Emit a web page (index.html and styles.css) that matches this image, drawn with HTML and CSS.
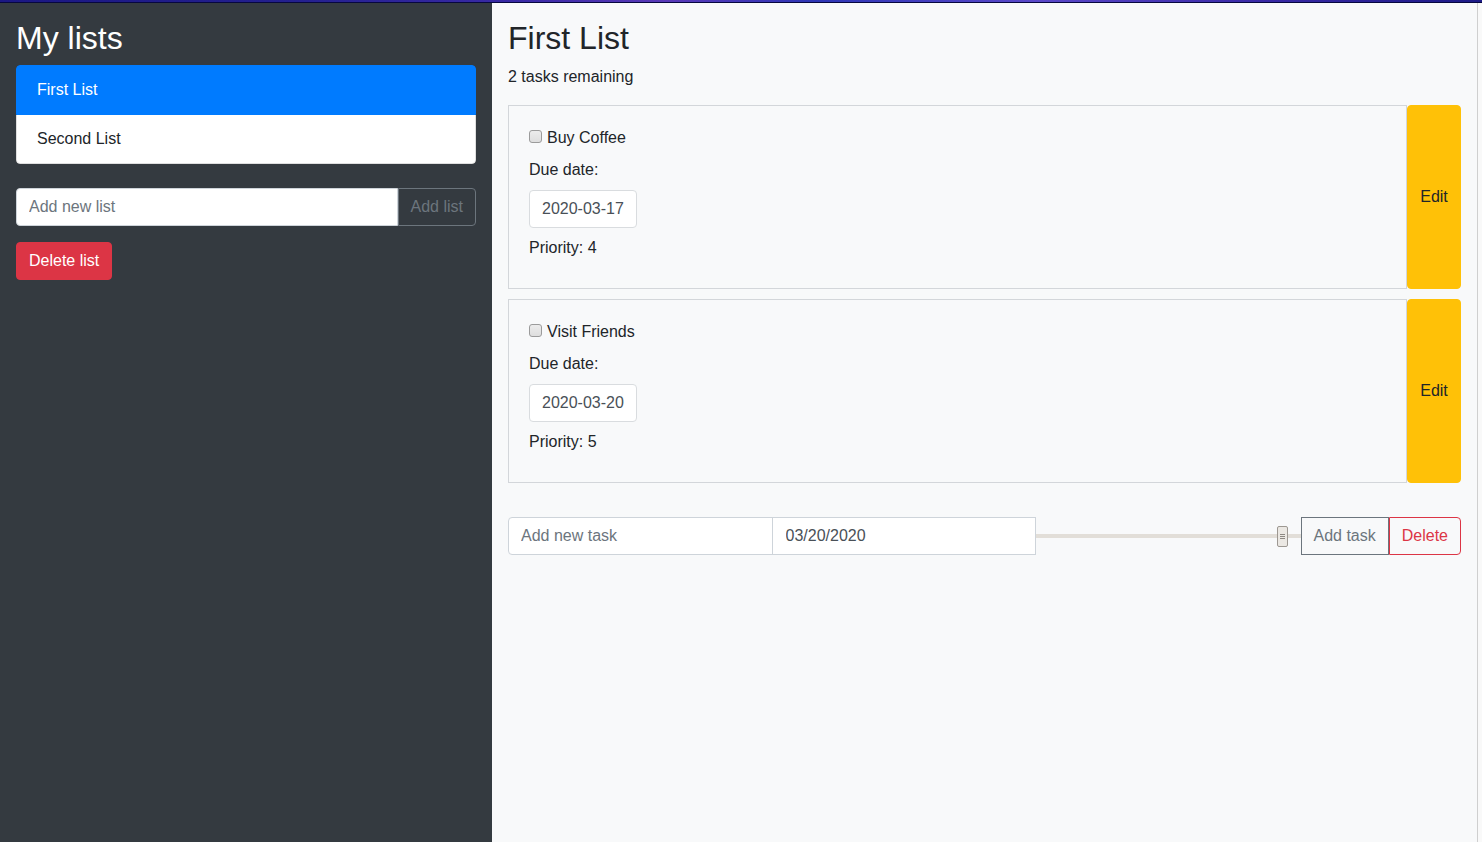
FILE: index.html
```html
<!DOCTYPE html>
<html lang="en">
<head>
<meta charset="utf-8">
<title>Todo lists</title>
<link rel="stylesheet" href="styles.css">
</head>
<body>
<div class="topbar"></div>
<div class="app">
  <aside class="sidebar">
    <h2 class="title title-light">My lists</h2>
    <ul class="list-group">
      <li class="list-item active">First List</li>
      <li class="list-item">Second List</li>
    </ul>
    <form class="input-group sidebar-form">
      <input class="form-control grow" type="text" placeholder="Add new list">
      <button class="btn btn-outline-secondary btn-last" type="button">Add list</button>
    </form>
    <button class="btn btn-danger" type="button">Delete list</button>
  </aside>

  <main class="main">
    <h2 class="title">First List</h2>
    <p class="remaining">2 tasks remaining</p>

    <div class="tasks">
      <div class="task-row">
        <div class="task-box">
          <label class="task-check"><input type="checkbox" class="checkbox">Buy Coffee</label>
          <div class="task-line">Due date:</div>
          <input class="date-field" type="text" value="2020-03-17">
          <div class="task-line">Priority: 4</div>
        </div>
        <button class="btn btn-warning btn-edit" type="button">Edit</button>
      </div>
      <div class="task-row">
        <div class="task-box">
          <label class="task-check"><input type="checkbox" class="checkbox">Visit Friends</label>
          <div class="task-line">Due date:</div>
          <input class="date-field" type="text" value="2020-03-20">
          <div class="task-line">Priority: 5</div>
        </div>
        <button class="btn btn-warning btn-edit" type="button">Edit</button>
      </div>
    </div>

    <form class="input-group add-task">
      <input class="form-control third first-ctl" type="text" placeholder="Add new task">
      <input class="form-control third mid-ctl" type="text" value="03/20/2020">
      <input class="range third" type="range" min="0" max="100" value="95">
      <button class="btn btn-outline-secondary btn-mid" type="button">Add task</button>
      <button class="btn btn-outline-danger btn-last" type="button">Delete</button>
    </form>
  </main>

  <div class="edge"></div>
</div>
</body>
</html>
```

FILE: styles.css
```css
* {
  box-sizing: border-box;
}

html, body {
  margin: 0;
  padding: 0;
}

body {
  font-family: "Liberation Sans", Arial, sans-serif;
  font-size: 16px;
  line-height: 1.5;
  color: #212529;
  background: #f8f9fa;
  overflow: hidden;
}

.topbar {
  height: 3px;
  background:
    linear-gradient(to bottom, transparent 0, transparent 2px, #07073f 2px),
    linear-gradient(to right, #1b1783 0%, #24208f 20%, #3a2aa6 35%, #5a3ab8 45%, #2e36b5 55%, #5b49c9 70%, #3a2aa6 85%, #1c1a86 100%);
}

.app {
  display: flex;
  height: 839px;
}

/* Sidebar */
.sidebar {
  width: 492px;
  flex: 0 0 492px;
  background: #343a40;
  padding: 16px;
}

.title {
  margin: 0 0 8px;
  font-size: 32px;
  font-weight: 400;
  line-height: 1.2;
  color: #212529;
}

.title-light {
  color: #ffffff;
}

.list-group {
  list-style: none;
  margin: 0 0 24px;
  padding: 0;
  border-radius: 4px;
  overflow: hidden;
}

.list-item {
  padding: 12px 20px;
  background: #ffffff;
  color: #212529;
  border: 1px solid rgba(0, 0, 0, 0.125);
}

.list-item + .list-item {
  border-top-width: 0;
}

.list-item.active {
  background: #007bff;
  border-color: #007bff;
  color: #ffffff;
}

.list-item:first-child {
  border-radius: 4px 4px 0 0;
}

.list-item:last-child {
  border-radius: 0 0 4px 4px;
}

.input-group {
  display: flex;
  align-items: stretch;
}

.sidebar-form {
  margin: 0 0 16px;
}

.form-control {
  display: block;
  height: 38px;
  padding: 6px 12px;
  font-family: inherit;
  font-size: 16px;
  line-height: 1.5;
  color: #495057;
  background: #ffffff;
  border: 1px solid #ced4da;
  border-radius: 4px;
  margin: 0;
  min-width: 0;
}

.form-control::placeholder {
  color: #6c757d;
  opacity: 1;
}

.grow {
  flex: 1 1 auto;
  border-radius: 4px 0 0 4px;
}

.btn {
  display: inline-block;
  font-family: inherit;
  font-size: 16px;
  line-height: 1.5;
  padding: 6px 12px;
  border: 1px solid transparent;
  border-radius: 4px;
  background: transparent;
  margin: 0;
  cursor: pointer;
  white-space: nowrap;
}

.btn-outline-secondary {
  color: #6c757d;
  border-color: #6c757d;
  background: transparent;
}

.btn-outline-danger {
  color: #dc3545;
  border-color: #dc3545;
  background: transparent;
}

.btn-danger {
  color: #ffffff;
  background: #dc3545;
  border-color: #dc3545;
}

.btn-warning {
  color: #212529;
  background: #ffc107;
  border-color: #ffc107;
}

.btn-last {
  border-radius: 0 4px 4px 0;
}

.btn-mid {
  border-radius: 0;
}

/* Main */
.main {
  width: 985px;
  flex: 0 0 985px;
  background: #f8f9fa;
  padding: 16px;
}

.remaining {
  margin: 0 0 16px;
}

.tasks {
  display: flex;
  flex-direction: column;
  gap: 10px;
  margin-bottom: 34px;
}

.task-row {
  display: flex;
  align-items: stretch;
}

.task-box {
  flex: 1 1 auto;
  border: 1px solid #d3d6da;
  padding: 20px;
}

.task-box > * {
  margin-bottom: 8px;
}

.task-check {
  display: flex;
  align-items: center;
  height: 24px;
}

.checkbox {
  -webkit-appearance: none;
  appearance: none;
  width: 13px;
  height: 13px;
  margin: -3px 5px 0 0;
  background: linear-gradient(#ececec, #dedede);
  border: 1px solid #9b9b9b;
  border-radius: 3px;
  flex: 0 0 13px;
}

.task-line {
  height: 24px;
}

.date-field {
  display: block;
  width: 108px;
  height: 38px;
  padding: 6px 12px;
  font-family: inherit;
  font-size: 16px;
  line-height: 1.5;
  color: #495057;
  background: #ffffff;
  border: 1px solid #d9dcdf;
  border-radius: 4px;
}

.btn-edit {
  flex: 0 0 auto;
  width: 54px;
  padding: 0;
  text-align: center;
}

.add-task {
  height: 38px;
}

.third {
  flex: 1 1 100px;
  min-width: 0;
}

.first-ctl {
  border-radius: 4px 0 0 4px;
}

.mid-ctl {
  border-radius: 0;
  margin-left: -1px;
  padding-left: 13px;
  color: #495057;
}

.range {
  -webkit-appearance: none;
  appearance: none;
  height: 38px;
  margin: 0;
  padding: 0;
  background: transparent;
}

.range::-webkit-slider-runnable-track {
  height: 4px;
  background: #e2ded8;
  border: none;
}

.range::-webkit-slider-thumb {
  -webkit-appearance: none;
  appearance: none;
  width: 11px;
  height: 21px;
  margin-top: -8px;
  border: 1px solid #9d9892;
  border-radius: 2px;
  background:
    linear-gradient(#8d8882, #8d8882) center 7px / 5px 1px no-repeat,
    linear-gradient(#8d8882, #8d8882) center 9px / 5px 1px no-repeat,
    linear-gradient(#8d8882, #8d8882) center 11px / 5px 1px no-repeat,
    #ebe8e3;
}

/* right frame edge */
.edge {
  flex: 1 1 auto;
  background: #f9f9f9;
  border-left: 1px solid #cfcfcf;
}
```
